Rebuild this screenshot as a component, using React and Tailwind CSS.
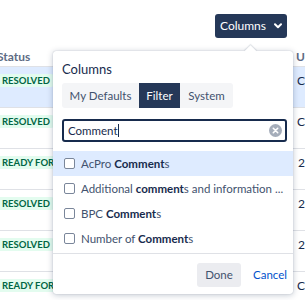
import React from "react";

const rows = [
  { status: "RESOLVED", right: "C", hl: true },
  { status: "RESOLVED", right: "C" },
  { status: "READY FOR REVIEW", right: "2" },
  { status: "RESOLVED", right: "2" },
  { status: "RESOLVED", right: "2" },
  { status: "READY FOR REVIEW", right: "C" },
];

const items = [
  { pre: "AcPro ", b: "Comment", post: "s", hl: true },
  { pre: "Additional ", b: "comment", post: "s and information ..." },
  { pre: "BPC ", b: "Comment", post: "s" },
  { pre: "Number of ", b: "Comment", post: "s" },
];

export default function App() {
  return (
    <div
      className="relative w-[305px] h-[300px] overflow-hidden bg-white"
      style={{ fontFamily: "Lato, 'Noto Sans', sans-serif" }}
    >
      {/* top bar */}
      <div className="h-[45px] flex justify-end items-start pt-[14px] pr-[18px]">
        <button className="h-[24px] w-[72px] rounded-[3px] bg-[#253858] text-white text-[12px] flex items-center justify-center gap-[8px]">
          <span>Columns</span>
          <svg width="8" height="6" viewBox="0 0 8 6">
            <path d="M1 1.2 L4 4.2 L7 1.2" stroke="white" strokeWidth="2" fill="none" strokeLinecap="round" strokeLinejoin="round" />
          </svg>
        </button>
      </div>

      {/* table */}
      <div className="flex flex-col">
        <div className="h-[22px] flex items-center border-b border-[#dfe1e6] text-[12px] font-bold text-[#5e6c84]">
          <div className="w-[302px] ml-[-3px] pt-[2px]">Status</div>
          <div className="flex-1 pl-[2px] pt-[2px]">U</div>
        </div>
        {rows.map((r, i) => (
          <div
            key={i}
            className={`h-[41px] flex items-start border-b border-[#dfe1e6] ${r.hl ? "bg-[#deebff]" : ""}`}
          >
            <div className="w-[300px] pt-[7px] ml-[-2px] flex">
              <span className="h-[13px] leading-[13px] px-[4px] rounded-[3px] bg-[#e3fcef] text-[#006644] text-[9.5px] font-bold whitespace-nowrap">
                {r.status}
              </span>
            </div>
            <div className="flex-1 pt-[6px] pl-[5px] text-[12px] text-[#172b4d] leading-[15px]">{r.right}</div>
          </div>
        ))}
      </div>

      {/* popup */}
      <div className="absolute left-[53px] top-[51px] w-[240px] h-[243px] bg-white rounded-[3px] shadow-[0_1px_6px_rgba(9,30,66,0.25),0_0_1px_rgba(9,30,66,0.31)] flex flex-col">
        <div className="absolute left-[193px] top-[-4px] w-[9px] h-[9px] bg-white rotate-45 shadow-[-1px_-1px_1px_rgba(9,30,66,0.12)]" />
        <div className="relative pl-[9px] pr-[6px] pt-[9px]">
          <div className="text-[13px] leading-[18px] text-[#172b4d]">Columns</div>
          <div className="mt-[5px] flex h-[25px] text-[11.5px]">
            <div className="w-[77px] flex items-center justify-center bg-[#f4f5f7] text-[#42526e] rounded-l-[3px]">My Defaults</div>
            <div className="w-[41px] flex items-center justify-center bg-[#253858] text-white">Filter</div>
            <div className="w-[53px] flex items-center justify-center bg-[#f4f5f7] text-[#42526e] rounded-r-[3px]">System</div>
          </div>
          <div className="mt-[11px] h-[23px] border-2 border-[#172b4d] rounded-[3px] flex items-center pl-[4px] pr-[3px]">
            <span className="text-[11.5px] text-[#172b4d]">Comment</span>
            <span className="w-px h-[13px] bg-[#172b4d]" />
            <span className="flex-1" />
            <svg width="13" height="13" viewBox="0 0 13 13">
              <circle cx="6.5" cy="6.5" r="6.5" fill="#a5adba" />
              <path d="M4.3 4.3 L8.7 8.7 M8.7 4.3 L4.3 8.7" stroke="white" strokeWidth="1.6" strokeLinecap="round" />
            </svg>
          </div>
        </div>
        <div className="mt-[9px] flex flex-col pb-[2px] border-b border-[#dfe1e6]">
          {items.map((it, i) => (
            <div
              key={i}
              className={`h-[25px] flex items-center pl-[11px] ${it.hl ? "bg-[#deebff]" : ""}`}
            >
              <span className="w-[11px] h-[11px] border-[1.5px] border-[#7a869a] rounded-[2px] bg-white shrink-0" />
              <span className="ml-[6px] text-[11.5px] text-[#42526e] whitespace-nowrap">
                {it.pre}
                <b className="text-[#172b4d] font-bold">{it.b}</b>
                {it.post}
              </span>
            </div>
          ))}
        </div>
        <div className="flex justify-end items-center gap-[12px] pr-[6px] pt-[9px]">
          <button className="h-[24px] w-[44px] rounded-[3px] bg-[#ebecf0] text-[#42526e] text-[11.5px]">Done</button>
          <span className="text-[11.5px] text-[#0052cc]">Cancel</span>
        </div>
      </div>
    </div>
  );
}
